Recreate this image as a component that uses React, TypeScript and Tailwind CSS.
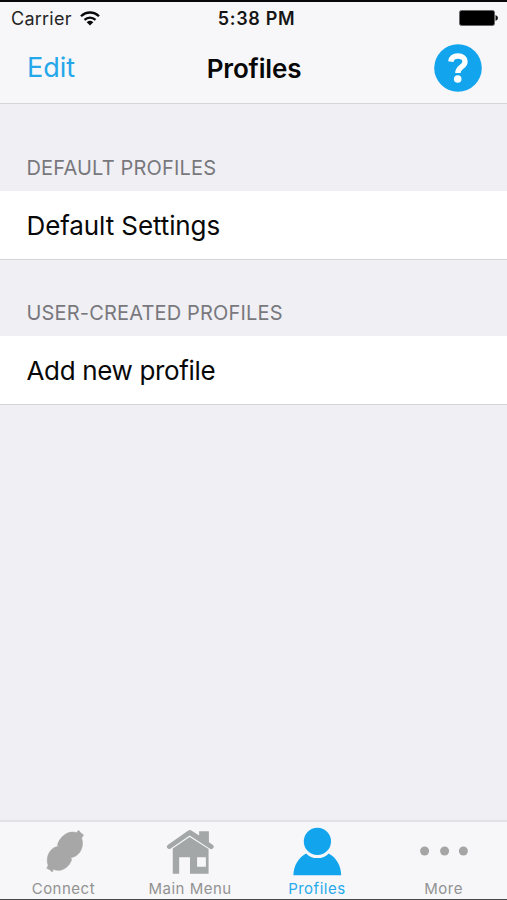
import type { ReactNode } from 'react';

function WifiIcon() {
  return (
    <svg className="h-[15px] w-5" viewBox="0 0 20 15" fill="none" stroke="#080808" strokeWidth="2.3">
      <path d="M1 5.3C6.2.2 13.8.2 19 5.3" />
      <path d="M4.5 8.8C7.7 5.8 12.3 5.8 15.5 8.8" />
      <path d="M10 14.5 6.7 11.2Q10 8.4 13.3 11.2Z" fill="#080808" stroke="none" />
    </svg>
  );
}

function BatteryIcon() {
  return (
    <svg className="h-4 w-[39px]" viewBox="0 0 39 16">
      <rect x="0.5" y="0.5" width="35" height="15" rx="2" fill="#000" stroke="#666" />
      <path d="M36.5 5Q39 6 39 8T36.5 11Z" fill="#111" />
    </svg>
  );
}

function HelpIcon() {
  return (
    <svg className="size-12" viewBox="0 0 48 48">
      <circle cx="24" cy="24" r="23.8" fill="#12a5ed" />
      <path
        d="M16.8 17.6C17.4 13.6 20.2 12 24 12C28.4 12 31 14.3 31 17.4C31 20.2 29.4 21.5 27.2 23.1C24.9 24.8 23.9 26 23.9 28.9"
        fill="none"
        stroke="#fff"
        strokeWidth="5.4"
      />
      <circle cx="23.7" cy="35" r="3.8" fill="#fff" />
    </svg>
  );
}

function ConnectIcon() {
  return (
    <svg className="h-[54px] w-[50px]" viewBox="0 0 50 54" fill="#a7a7a7">
      <path
        transform="translate(6.2 4) scale(.3333)"
        stroke="#a7a7a7"
        strokeWidth="2"
        strokeLinejoin="round"
        d="M97 20 103 13 109 20 118 27 112 36C117 50 115 66 107 78 100 88 90 94 79 95L82 100C79 114 68 126 54 131 45 134 35 133 28 130L24 138 17 131 8 127 12 118C7 105 9 88 18 76 24 67 34 62 43 61L40 57C43 44 53 31 65 24 75 18 87 17 97 20Z"
      />
    </svg>
  );
}

function HomeIcon() {
  return (
    <svg className="h-[54px] w-[50px]" viewBox="0 0 50 54" fill="#a4a7a7">
      <g transform="translate(-.7 3.8) scale(.338)">
        <path d="M10 57 70 15Q75 11 80 14L103 29V16H132V49L144 57Q149 61 145 66 141 71 135 68L75 29 19 67Q13 71 9 66 5 61 10 57Z" />
        <path fillRule="evenodd" d="M25 67 75 33 131 69V142H76V93H44V142H25ZM97 93V121H123V93Z" />
      </g>
    </svg>
  );
}

function PersonIcon() {
  return (
    <svg className="h-[54px] w-[50px]" viewBox="0 0 50 54" fill="#12a5ed">
      <circle cx="25.4" cy="19.4" r="13.6" />
      <path d="M14.1 31.4C16.8 34.5 20.6 36.1 25.4 36.1S34 34.5 36.7 31.4C44.4 35.7 49.1 43.5 49.2 53.2H1.4C1.6 43.5 6.4 35.7 14.1 31.4Z" />
    </svg>
  );
}

function MoreIcon() {
  return (
    <svg className="h-[54px] w-[50px]" viewBox="0 0 50 54" fill="#a5a5a5">
      <circle cx="5.6" cy="29" r="4.5" />
      <circle cx="25.6" cy="29" r="4.5" />
      <circle cx="44.4" cy="29" r="4.5" />
    </svg>
  );
}

function Tab({ icon, label, active = false }: { icon: ReactNode; label: string; active?: boolean }) {
  return (
    <button className="flex flex-1 flex-col items-center">
      {icon}
      <span
        className={`mt-[3px] whitespace-nowrap text-[15px] leading-5 tracking-[0.5px] ${
          active ? 'text-[#27aaed]' : 'text-[#929292]'
        }`}
      >
        {label}
      </span>
    </button>
  );
}

function Section({
  title,
  item,
  titleClass,
  itemClass,
}: {
  title: string;
  item: string;
  titleClass: string;
  itemClass: string;
}) {
  return (
    <section>
      <h2
        className={`flex items-end pb-[11px] pl-[26.5px] text-[20px] leading-6 tracking-[0.17px] text-[#78787d] ${titleClass}`}
      >
        {title}
      </h2>
      <div
        className={`flex h-[69px] items-center border-b border-[#d4d4d8] bg-white pl-[26.5px] text-[26px] text-[#080808] ${itemClass}`}
      >
        {item}
      </div>
    </section>
  );
}

export default function App() {
  return (
    <div className="flex h-[900px] w-[507px] flex-col overflow-hidden border-t-2 border-b border-t-[#08080c] border-b-[#48484b] bg-[#efeff4] font-['Inter',sans-serif]">
      <header className="h-[102px] border-b border-[#d5d5d9] bg-[#f7f7f9]">
        <div className="grid h-8 grid-cols-3 items-center pr-[9px] pl-[11px]">
          <div className="flex items-center gap-2 text-[18px] tracking-[0.25px] text-[#252525]">
            <span>Carrier</span>
            <WifiIcon />
          </div>
          <div className="pl-1 text-center text-[18px] font-semibold tracking-[0.65px] whitespace-nowrap text-[#151515]">
            5:38 PM
          </div>
          <div className="flex justify-end">
            <BatteryIcon />
          </div>
        </div>
        <div className="grid h-[68px] grid-cols-3 items-center pr-[25px] pl-[26px]">
          <button className="pl-px text-left text-[27px] text-[#25a8e9]">Edit</button>
          <h1 className="text-center text-[26px] font-semibold tracking-[-0.15px] text-[#080808]">Profiles</h1>
          <button className="flex justify-end" aria-label="Help">
            <HelpIcon />
          </button>
        </div>
      </header>

      <main className="flex-1">
        <Section
          title="DEFAULT PROFILES"
          item="Default Settings"
          titleClass="h-[87px]"
          itemClass="tracking-[-0.1px]"
        />
        <Section
          title="USER-CREATED PROFILES"
          item="Add new profile"
          titleClass="h-[76px]"
          itemClass="tracking-[-0.35px]"
        />
      </main>

      <nav className="flex h-[79px] border-t-2 border-[#e2e2e6] bg-[#f7f7f9]">
        <Tab icon={<ConnectIcon />} label="Connect" />
        <Tab icon={<HomeIcon />} label="Main Menu" />
        <Tab icon={<PersonIcon />} label="Profiles" active />
        <Tab icon={<MoreIcon />} label="More" />
      </nav>
    </div>
  );
}
